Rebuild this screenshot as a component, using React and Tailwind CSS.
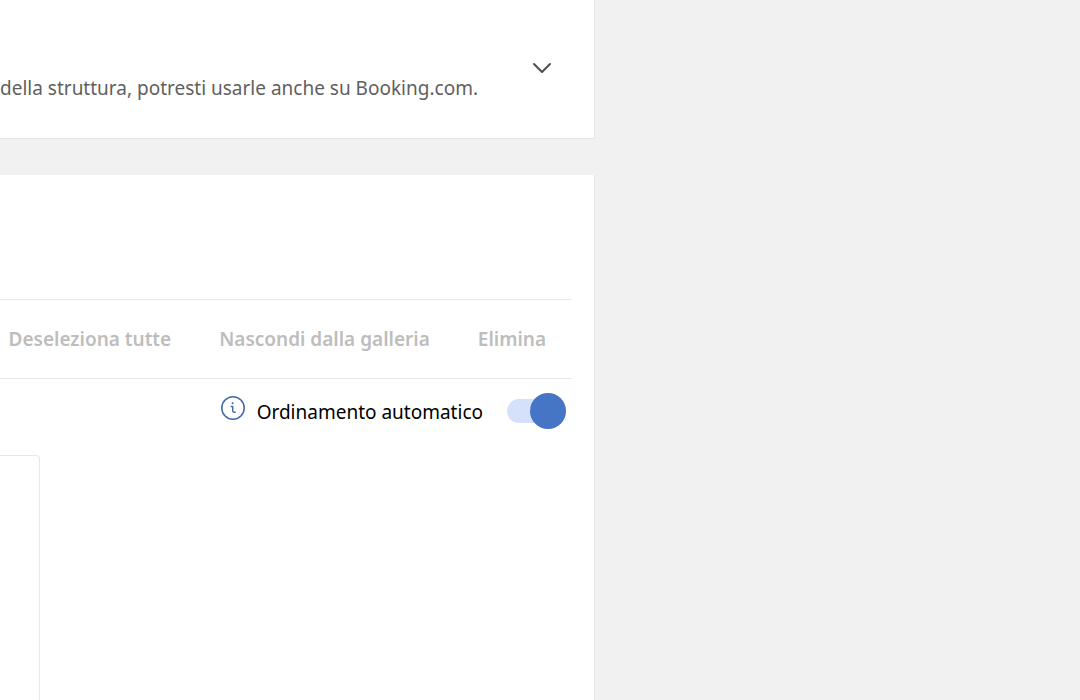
import React, { useState } from "react";

const actions = ["Deseleziona tutte", "Nascondi dalla galleria", "Elimina"];

function InfoIcon() {
  return (
    <svg
      viewBox="0 0 24 24"
      className="w-6 h-6"
      fill="none"
      stroke="#3f68a6"
      strokeWidth="1.5"
      strokeLinecap="round"
      strokeLinejoin="round"
      aria-hidden="true"
    >
      <circle cx="12" cy="12" r="11.2" />
      <path d="M10.2 10.5h1.5v4.3c0 .8.5 1.4 1.3 1.4h1.2" strokeWidth="1.4" />
      <circle cx="11.6" cy="7.2" r="1" fill="#3f68a6" stroke="none" />
    </svg>
  );
}

export default function App() {
  const [open, setOpen] = useState(false);
  const [autoSort, setAutoSort] = useState(true);

  return (
    <div className="min-h-screen flex flex-col bg-[#f1f1f1] font-['Noto_Sans',sans-serif] text-[19px] leading-7 text-black overflow-x-hidden">
      <main className="w-[55%] pr-px grow flex flex-col gap-9 box-content">
        {/* Intro card */}
        <section className="bg-white border-b border-r border-b-[#e4e4e4] border-r-[#e9e9e9] flex items-start justify-end gap-[52px] pt-14 pr-10 pb-9 -mr-px">
          <p className="pt-[18px] text-[#5f5f5f] whitespace-nowrap">
            della struttura, potresti usarle anche su Booking.com.
          </p>
          <button
            type="button"
            aria-label="Espandi"
            aria-expanded={open}
            onClick={() => setOpen(!open)}
          >
            <svg
              viewBox="0 0 24 24"
              className="w-6 h-6"
              fill="none"
              stroke="#4f4f4f"
              strokeWidth="2"
              strokeLinecap="round"
              strokeLinejoin="round"
            >
              <path d="M4 8l8 8 8-8" />
            </svg>
          </button>
        </section>

        {/* Gallery */}
        <section className="grow bg-white border-r border-[#e9e9e9] pt-[124px] pr-[22px] -mr-px">
          <div className="h-20 border-y border-[#e8e8e8] flex items-center justify-end gap-12 pr-[26px]">
            {actions.map((label) => (
              <button
                key={label}
                type="button"
                disabled
                className="font-semibold text-[#bdbdbd] whitespace-nowrap"
              >
                {label}
              </button>
            ))}
          </div>

          <div className="flex justify-end items-center h-16 pr-1.5">
            <button type="button" aria-label="Informazioni" className="mr-3 mb-1.5">
              <InfoIcon />
            </button>
            <label htmlFor="auto-sort" className="mr-6 pt-0.5 whitespace-nowrap">
              Ordinamento automatico
            </label>
            <input
              id="auto-sort"
              type="checkbox"
              checked={autoSort}
              onChange={(e) => setAutoSort(e.target.checked)}
              className="appearance-none flex items-center w-[59px] h-6 rounded-full bg-[#d5e1fa] cursor-pointer before:content-[''] before:block before:w-9 before:h-9 before:shrink-0 before:rounded-full before:bg-[#a5a5a5] checked:before:bg-[#4775c6] checked:before:ml-auto"
            />
          </div>

          <div className="w-10 h-[280px] mt-3 border-t border-r border-[#e8e8e8] rounded-tr-sm"></div>
        </section>
      </main>
    </div>
  );
}
